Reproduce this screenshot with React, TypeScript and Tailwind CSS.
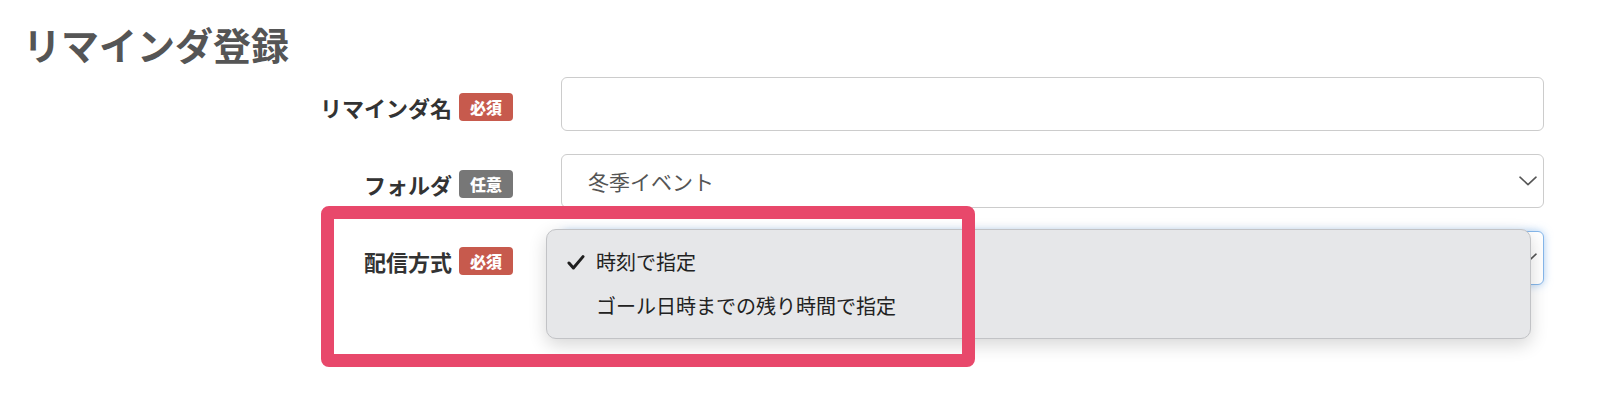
import React from 'react';

const FONT = { fontFamily: '"Noto Sans CJK JP", "Noto Sans", sans-serif' };

function Badge({ required }: { required: boolean }) {
    return (
        <span
            className={`inline-flex h-[28px] w-[54px] items-center justify-center rounded-[4px] text-[16px] font-black leading-none text-white ${required ? 'bg-[#c75a4d]' : 'bg-[#777777]'}`}
        >
            {required ? '必須' : '任意'}
        </span>
    );
}

function Chevron() {
    return (
        <svg className="absolute right-[7px] top-1/2 -translate-y-1/2" width="18" height="10" viewBox="0 0 18 10" fill="none">
            <path d="M1 1.2 L9 8.6 L17 1.2" stroke="#555" strokeWidth="1.6" strokeLinecap="round" strokeLinejoin="round" />
        </svg>
    );
}

function Check() {
    return (
        <svg width="18" height="15" viewBox="0 0 18 15" fill="none">
            <path d="M2 8 L6.4 13 L16 1.6" stroke="#1f1f1f" strokeWidth="3" strokeLinecap="round" strokeLinejoin="round" />
        </svg>
    );
}

function Row({ label, required, children }: { label: string; required: boolean; children: React.ReactNode }) {
    return (
        <div className="flex h-[54px] items-center">
            <div className="flex w-[513px] items-center justify-end gap-[7px] pt-[6px]">
                <span className="text-[22px] font-bold leading-none text-[#333]">{label}</span>
                <Badge required={required} />
            </div>
            <div className="relative ml-[48px] h-full w-[983px]">{children}</div>
        </div>
    );
}

export default function App() {
    return (
        <div className="relative min-h-[408px] w-full bg-white" style={FONT}>
            <h1 className="pl-[23px] pt-[25px] text-[38px] font-bold leading-[38px] text-[#555]">リマインダ登録</h1>

            <div className="mt-[14px] flex flex-col gap-[23px]">
                <Row label="リマインダ名" required>
                    <div className="h-full w-full rounded-[6px] border border-[#cccccc] bg-white" />
                </Row>

                <Row label="フォルダ" required={false}>
                    <div className="flex h-full w-full items-center rounded-[6px] border border-[#cccccc] bg-white pl-[26px]">
                        <span className="text-[21px] leading-none text-[#555]">冬季イベント</span>
                    </div>
                    <Chevron />
                </Row>

                <Row label="配信方式" required>
                    <div className="h-full w-full rounded-[6px] border border-[#86b7ea] bg-white shadow-[0_0_9px_rgba(102,165,233,0.55)]" />
                    <Chevron />

                    {/* native select popup */}
                    <div className="absolute left-[-15px] right-[13px] top-[-2px] z-10 flex h-[110px] flex-col rounded-[10px] border border-[#c2c3c6] bg-[#e6e7e9] py-[10px] shadow-[0_6px_18px_rgba(0,0,0,0.16)]">
                        <div className="flex h-[44px] items-center">
                            <span className="flex w-[49px] justify-end pr-[11px]">
                                <Check />
                            </span>
                            <span className="text-[20px] leading-none text-[#222]">時刻で指定</span>
                        </div>
                        <div className="flex h-[44px] items-center pl-[49px]">
                            <span className="text-[20px] leading-none text-[#222]">ゴール日時までの残り時間で指定</span>
                        </div>
                    </div>
                </Row>
            </div>

            {/* highlight frame */}
            <div className="absolute left-[321px] top-[206px] z-20 h-[161px] w-[654px] rounded-[8px] border-[13px] border-[#e8486b]" />
        </div>
    );
}
